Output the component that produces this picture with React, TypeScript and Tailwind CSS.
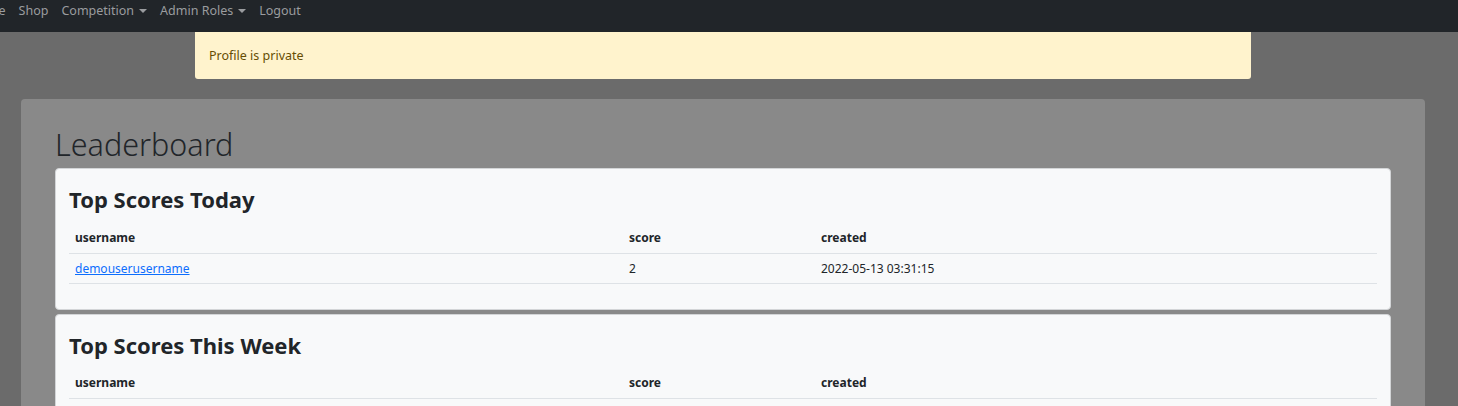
import React from 'react'

const font = { fontFamily: '"Noto Sans", "Open Sans", sans-serif' }

interface Row {
  username: string
  score: number
  created: string
}

const NavCaret = () => (
  <span className="ml-[5px] inline-block w-0 h-0 border-x-[4px] border-x-transparent border-t-[4px] border-t-[#9a9c9f]" />
)

const ScoreCard = ({ title, rows }: { title: string; rows: Row[] }) => (
  <div className="bg-[#f8f9fa] border border-[#d3d5d7] rounded-[4px] px-[13px] pt-[17px] pb-[25px]">
    <h2 className="text-[22px] font-bold text-[#212529] leading-[26px] mb-[11px]">{title}</h2>
    <table className="w-full text-[12px] text-[#212529] border-collapse">
      <thead>
        <tr className="border-b border-[#dee2e6]">
          <th className="w-[554px] text-left font-bold px-[6px] h-[30px]">username</th>
          <th className="w-[192px] text-left font-bold px-[6px]">score</th>
          <th className="text-left font-bold px-[6px]">created</th>
        </tr>
      </thead>
      <tbody>
        {rows.map(r => (
          <tr key={r.username} className="border-b border-[#dee2e6]">
            <td className="px-[6px] pt-[2px] h-[30px]">
              <a href="#" className="text-[#0d6efd] underline">{r.username}</a>
            </td>
            <td className="px-[6px] pt-[2px]">{r.score}</td>
            <td className="px-[6px] pt-[2px]">{r.created}</td>
          </tr>
        ))}
      </tbody>
    </table>
  </div>
)

export default function App() {
  const today: Row[] = [{ username: 'demouserusername', score: 2, created: '2022-05-13 03:31:15' }]
  const week: Row[] = [{ username: 'demouserusername', score: 2, created: '2022-05-13 03:31:15' }]

  return (
    <div className="w-[1458px] h-[406px] overflow-hidden bg-[#6b6b6b]" style={font}>
      {/* Navbar */}
      <nav className="h-[32px] bg-[#212529] overflow-hidden pt-[2px] text-[12.5px] leading-[18px] text-[#9a9c9f]">
        <div className="flex items-center -ml-[30px] gap-[13px]">
          <span>Home</span>
          <span>Shop</span>
          <span className="flex items-center">Competition<NavCaret /></span>
          <span className="flex items-center">Admin Roles<NavCaret /></span>
          <span>Logout</span>
        </div>
      </nav>

      {/* Alert */}
      <div className="ml-[195px] w-[1056px] h-[47px] bg-[#fff3cd] rounded-b-[3px] flex items-center px-[14px] pt-[2px] text-[12.5px] text-[#664d03]">
        Profile is private
      </div>

      {/* Main panel */}
      <div className="mt-[20px] ml-[21px] w-[1404px] h-[400px] bg-[#898989] rounded-[4px] px-[34px] pt-[26px]">
        <h1 className="text-[30.5px] font-light text-[#212529] leading-[38px] mb-[5px]">Leaderboard</h1>
        <div className="flex flex-col gap-[4px]">
          <ScoreCard title="Top Scores Today" rows={today} />
          <ScoreCard title="Top Scores This Week" rows={week} />
        </div>
      </div>
    </div>
  )
}
